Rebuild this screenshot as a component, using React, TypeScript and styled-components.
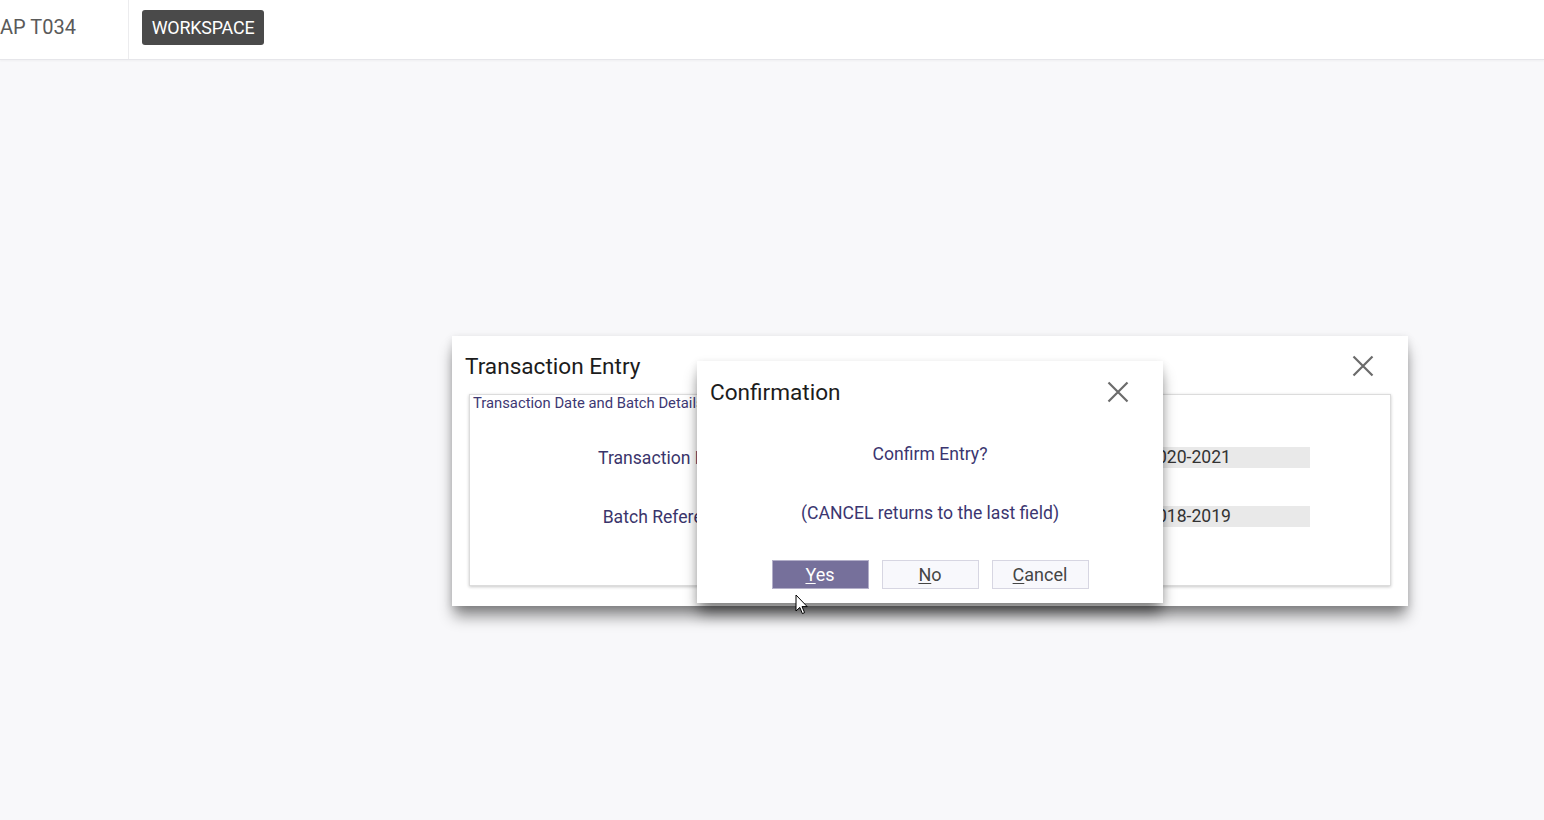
import React from "react";
import styled, { createGlobalStyle } from "styled-components";

const Global = createGlobalStyle`
  html, body { margin: 0; padding: 0; }
  body {
    background: #f8f8fa;
    font-family: Roboto, "Noto Sans", "Liberation Sans", sans-serif;
    overflow: hidden;
  }
  #root { min-height: 820px; }
`;

const Page = styled.div`
  position: relative;
  width: 1544px;
  height: 820px;
  display: flex;
  flex-direction: column;
`;

const TopBar = styled.header`
  height: 59px;
  background: #ffffff;
  border-bottom: 1px solid #e6e6ea;
  box-shadow: 0 1px 2px rgba(0, 0, 0, 0.04);
  display: flex;
  align-items: stretch;
`;

const AppCode = styled.div`
  width: 129px;
  border-right: 1px solid #ececee;
  display: flex;
  align-items: center;
  font-size: 20px;
  color: #5a5a5a;
  padding-bottom: 5px;
  box-sizing: border-box;
  white-space: nowrap;
`;

const WorkspaceButton = styled.button`
  margin: 10px 0 0 13px;
  height: 35px;
  width: 122px;
  padding: 0;
  background: #4a4a4a;
  color: #ffffff;
  border: none;
  border-radius: 3px;
  font-family: inherit;
  font-size: 17.9px;
  letter-spacing: -0.2px;
  cursor: pointer;
`;

const Canvas = styled.main`
  flex: 1;
  position: relative;
`;

const Window = styled.div<{ $left: number; $top: number; $width: number; $height: number }>`
  position: absolute;
  left: ${(p) => p.$left}px;
  top: ${(p) => p.$top - 60}px;
  width: ${(p) => p.$width}px;
  height: ${(p) => p.$height}px;
  background: #ffffff;
  box-sizing: border-box;
  box-shadow: 0 12px 14px -2px rgba(0, 0, 0, 0.45), 0 2px 8px rgba(0, 0, 0, 0.12);
  display: flex;
  flex-direction: column;
`;

const TitleRow = styled.div<{ $height: number; $padRight: number }>`
  height: ${(p) => p.$height}px;
  display: flex;
  align-items: center;
  justify-content: space-between;
  padding: 2px ${(p) => p.$padRight}px 0 13px;
  box-sizing: border-box;
  flex-shrink: 0;
`;

const Title = styled.div`
  font-size: 22.6px;
  color: #1c1c1c;
`;

const CloseButton = styled.button`
  width: 22px;
  height: 22px;
  padding: 0;
  border: none;
  background: transparent;
  cursor: pointer;
  display: flex;
  align-items: center;
  justify-content: center;
`;

const CloseIcon = () => (
  <svg width="22" height="22" viewBox="0 0 22 22">
    <path d="M1.5 1.5 L20.5 20.5 M20.5 1.5 L1.5 20.5" stroke="#6b6b6b" strokeWidth="2.2" fill="none" />
  </svg>
);

const FieldSet = styled.section`
  margin: 0 17px 20px 17px;
  flex: 1;
  border: 1px solid #dcdcdc;
  box-shadow: 0 1px 3px rgba(0, 0, 0, 0.22);
  display: flex;
  flex-direction: column;
`;

const Legend = styled.div`
  font-size: 14.8px;
  color: #3d3873;
  padding: 0 0 0 3px;
  line-height: 16px;
`;

const FieldGrid = styled.div`
  display: grid;
  grid-template-columns: 673px 167px;
  row-gap: 38px;
  padding-top: 36px;
  align-items: center;
`;

const Label = styled.label`
  font-size: 17.6px;
  color: #3a356b;
  text-align: right;
  padding-right: 412px;
`;

const ValueBox = styled.div`
  height: 21px;
  background: #e9e9e9;
  color: #333;
  font-size: 17.6px;
  line-height: 21px;
  padding-left: 4px;
`;

const ConfirmBody = styled.div`
  display: flex;
  flex-direction: column;
  align-items: center;
  padding-top: 21px;
`;

const Message = styled.p<{ $gap: number }>`
  margin: 0 0 ${(p) => p.$gap}px 0;
  font-size: 17.6px;
  line-height: 24px;
  color: #3b3670;
`;

const ButtonRow = styled.div`
  display: flex;
  gap: 13px;
  margin-top: 35px;
`;

const DialogButton = styled.button<{ $primary?: boolean }>`
  width: 97px;
  height: 29px;
  box-sizing: border-box;
  font-family: inherit;
  font-size: 18px;
  cursor: pointer;
  border: 1px solid ${(p) => (p.$primary ? "#b3afc9" : "#d7d6e2")};
  background: ${(p) => (p.$primary ? "#76709b" : "#f8f8fc")};
  color: ${(p) => (p.$primary ? "#ffffff" : "#454545")};
  padding: 0;
  u { text-decoration-thickness: 1px; text-underline-offset: 2px; }
`;

const Pointer = styled.div`
  position: absolute;
  left: 795px;
  top: ${594 - 60}px;
  width: 14px;
  height: 22px;
  pointer-events: none;
`;

export default function App() {
  return (
    <>
      <Global />
      <Page>
        <TopBar>
          <AppCode>AP T034</AppCode>
          <div>
            <WorkspaceButton>WORKSPACE</WorkspaceButton>
          </div>
        </TopBar>
        <Canvas>
          <Window $left={452} $top={336} $width={956} $height={270}>
            <TitleRow $height={58} $padRight={34}>
              <Title>Transaction Entry</Title>
              <CloseButton aria-label="Close">
                <CloseIcon />
              </CloseButton>
            </TitleRow>
            <FieldSet>
              <Legend>Transaction Date and Batch Details</Legend>
              <FieldGrid>
                <Label>Transaction Date</Label>
                <ValueBox>2020-2021</ValueBox>
                <Label>Batch Reference</Label>
                <ValueBox>2018-2019</ValueBox>
              </FieldGrid>
            </FieldSet>
          </Window>

          <Window $left={697} $top={361} $width={466} $height={242}>
            <TitleRow $height={60} $padRight={34}>
              <Title>Confirmation</Title>
              <CloseButton aria-label="Close">
                <CloseIcon />
              </CloseButton>
            </TitleRow>
            <ConfirmBody>
              <Message $gap={35}>Confirm Entry?</Message>
              <Message $gap={0}>(CANCEL returns to the last field)</Message>
              <ButtonRow>
                <DialogButton $primary>
                  <u>Y</u>es
                </DialogButton>
                <DialogButton>
                  <u>N</u>o
                </DialogButton>
                <DialogButton>
                  <u>C</u>ancel
                </DialogButton>
              </ButtonRow>
            </ConfirmBody>
          </Window>

          <Pointer>
            <svg width="14" height="22" viewBox="0 0 14 22">
              <path
                d="M1 1 L1 17 L4.8 13.4 L7.4 19.6 L9.6 18.6 L7 12.6 L12.2 12.6 Z"
                fill="#ffffff"
                stroke="#000000"
                strokeWidth="1"
                strokeLinejoin="round"
              />
            </svg>
          </Pointer>
        </Canvas>
      </Page>
    </>
  );
}
